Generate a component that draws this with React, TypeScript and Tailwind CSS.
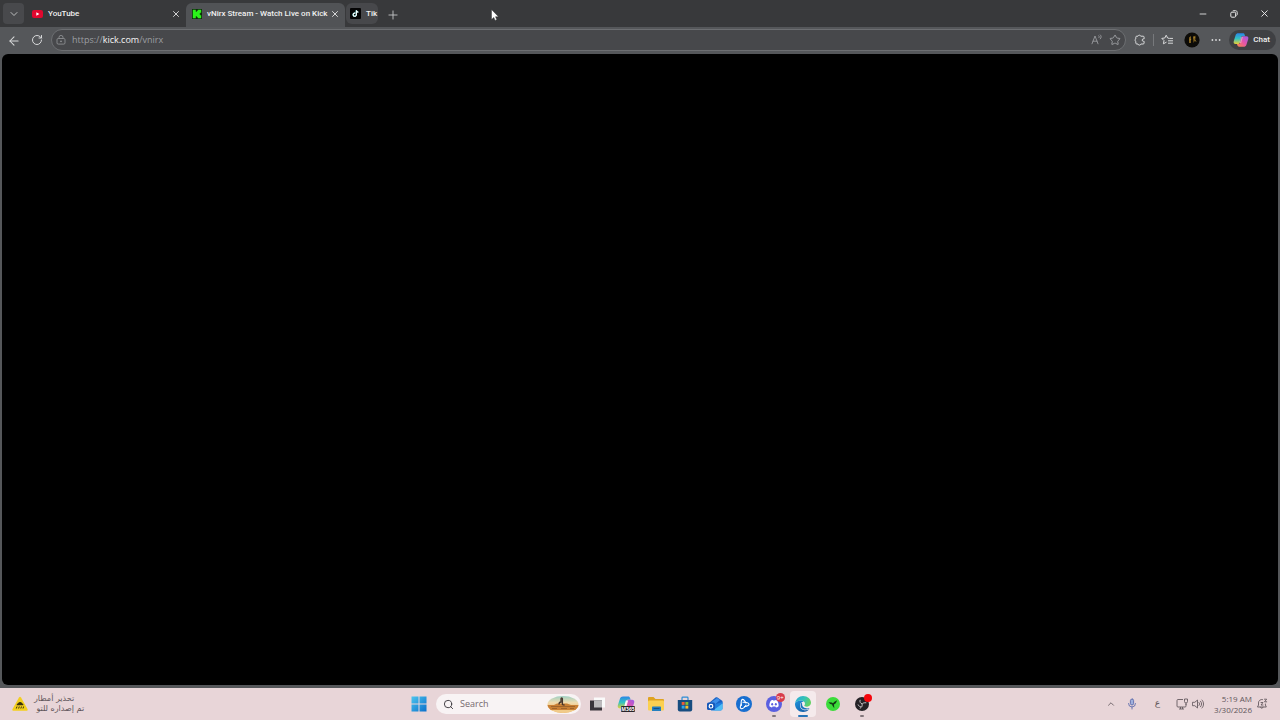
import type { ReactNode } from "react";
import { ArrowLeft, ChevronDown, ChevronUp, Minus, Plus, RotateCw, Search, Star, X } from "lucide-react";

function YouTubeIcon() {
  return (
    <svg viewBox="0 0 11 8" className="h-2 w-[11px] shrink-0">
      <rect width="11" height="8" rx="2" fill="#e0082f" />
      <path d="M4.3 2.2 7.4 4 4.3 5.8Z" fill="#fff" />
    </svg>
  );
}

function KickIcon() {
  return (
    <svg viewBox="0 0 10 10" className="size-2.5 shrink-0">
      <rect width="10" height="10" fill="#0c2b0a" />
      <path d="M.8.8h3v2h1v-1h1v-1h3.4v3h-1v1h-1v.5h1v1h1v3H5.8v-1h-1v-1h-1v2h-3Z" fill="#2bf31a" />
    </svg>
  );
}

function TikTokIcon() {
  return (
    <svg viewBox="0 0 11 11" className="size-[11px] shrink-0">
      <rect width="11" height="11" rx="1" fill="#050505" />
      <path d="M5.2 5.1a1.6 1.6 0 1 0 1 1.5V2.3c.2 1 .9 1.7 2 1.8" fill="none" stroke="#5de3e2" strokeWidth="1.1" />
      <path d="M5.4 5.2a1.6 1.6 0 1 0 1 1.5V2.4c.2 1 .9 1.7 2 1.8" fill="none" stroke="#fff" strokeWidth="1.1" />
    </svg>
  );
}

function LockBagIcon() {
  return (
    <svg viewBox="0 0 10 10" className="size-2.5 shrink-0" fill="none" stroke="#96989b" strokeWidth="0.8">
      <rect x="1" y="3.5" width="8" height="5.6" rx="1.2" />
      <path d="M3 3.5V2.4a2 2 0 0 1 4 0v1.1" />
      <circle cx="5" cy="6.3" r="0.5" fill="#96989b" />
    </svg>
  );
}

function ReadAloudIcon() {
  return (
    <svg viewBox="0 0 12 12" className="size-3" fill="none" stroke="#a3a5a8" strokeWidth="0.8" strokeLinecap="round">
      <path d="M1 9.8 4 2l3 7.8M2 7.2h4M7.8 1.8c.6.6.6 1.4 0 2M9.3.9c1.200 1.100 1.200 2.800 0 4" />
    </svg>
  );
}

function ExtensionsIcon() {
  return (
    <svg viewBox="0 0 12 12" className="size-3" fill="none" stroke="#d8d9da" strokeWidth="1" strokeLinejoin="round">
      <path d="M4 2.2a1.4 1.4 0 0 1 2.7 0h2.4a1 1 0 0 1 1 1v1.7H9.4a1.2 1.2 0 0 0 0 2.4h.7V9a1 1 0 0 1-1 1H6.9a1.5 1.5 0 0 1-2.9 0H2.8a1 1 0 0 1-1-1V7.3a1.3 1.3 0 0 1 0-2.4V3.2a1 1 0 0 1 1-1Z" />
    </svg>
  );
}

function FavoritesIcon() {
  return (
    <svg viewBox="0 0 13 12" className="h-3 w-[13px]" fill="none" stroke="#d8d9da" strokeWidth="1" strokeLinejoin="round" strokeLinecap="round">
      <path d="M7.7 4.3 6.6 4 5.2 1.2 3.8 4l-3 .4L3 6.6l-.6 3.2 2.8-1.5" />
      <path d="M8.6 4.4h3M7.4 6.8h4.2M7.4 9.2h4.2" />
    </svg>
  );
}

function Avatar() {
  return (
    <svg viewBox="0 0 16 16" className="size-4">
      <circle cx="8" cy="8" r="7.6" fill="#0c0b08" />
      <path d="M5 5.5 7 4v7H5ZM9 4.6l2.4-.8v3.6L9.6 11Z" fill="#80611f" />
      <path d="m5.4 8 1.8-.7M9.4 6l1.8-.6M11 8l1 1.6" stroke="#b18b32" strokeWidth="0.8" />
    </svg>
  );
}

function CopilotIcon({ badge = false }: { badge?: boolean }) {
  const id = badge ? "m365" : "chat";
  return (
    <svg viewBox="0 0 18 18" className={badge ? "size-[18px]" : "size-4"}>
      <defs>
        <linearGradient id={`${id}-l`} x1="0" y1="0" x2="0" y2="1">
          <stop offset="0" stopColor="#2a86e8" />
          <stop offset="0.5" stopColor="#34c3c0" />
          <stop offset="1" stopColor="#e8cf35" />
        </linearGradient>
        <linearGradient id={`${id}-r`} x1="1" y1="0" x2="0" y2="1">
          <stop offset="0" stopColor="#9a5bea" />
          <stop offset="0.5" stopColor="#e554a8" />
          <stop offset="1" stopColor="#fb8a45" />
        </linearGradient>
      </defs>
      <path d="M6 1.5h5.2c1 0 1.6.6 1.9 1.5l.5 1.8h-2.5c-1 0-1.6.6-1.9 1.5L7.5 12c-.3 1-.9 1.4-1.8 1.4H3c-2 0-2.7-1.3-2.1-3.3L3 3.5c.4-1.300 1.500-2 3-2Z" fill={`url(#${id}-l)`} />
      <path d="M12 16.500H6.800c-1 0-1.600-.6-1.900-1.500l-.5-1.600h1.500c1 0 1.700-.5 2-1.400l1.700-5.700c.3-1 .9-1.500 1.800-1.500H15c2 0 2.700 1.300 2.100 3.300L15 14.500c-.4 1.300-1.500 2-3 2Z" fill={`url(#${id}-r)`} />
      <path d="M8.800 5.500h2.400l-2 6.800H7Z" fill="#fff" opacity={badge ? 0.9 : 0.35} />
      {badge && (
        <>
          <rect x="4" y="11" width="14" height="6" rx="1" fill="#28242a" />
          <text x="11" y="16" textAnchor="middle" fontSize="5" fontWeight="700" fill="#fff">M365</text>
        </>
      )}
    </svg>
  );
}

function RestoreIcon() {
  return (
    <svg viewBox="0 0 8 8" className="size-2" fill="none" stroke="#e8e8e8" strokeWidth="1">
      <rect x="0.8" y="2.2" width="4.8" height="5" rx="1" />
      <path d="M2.5 1.2c.2-.4.5-.5.9-.5h2.1c1 0 1.7.7 1.7 1.7v2c0 .6-.2 1-.7 1.2" />
    </svg>
  );
}

function WarningIcon() {
  return (
    <svg viewBox="0 0 16 16" className="size-4">
      <path d="M7 1.6a1.2 1.2 0 0 1 2 0l6.500 11.400c.5.900 0 1.800-1 1.800h-13c-1 0-1.500-.9-1-1.800Z" fill="#f3cf1d" />
      <path d="M4.700 9.200a1.700 1.700 0 0 1 1.400-2 2.200 2.200 0 0 1 4 0 1.500 1.500 0 0 1 1.200 2Z" fill="#39320f" />
      <path d="m5 10.500-.7 2M7.300 10.500l-.7 2M9.500 10.500l-.7 2M11.600 10.500l-.6 2" stroke="#39320f" strokeWidth="1" />
    </svg>
  );
}

function StartIcon() {
  return (
    <svg viewBox="0 0 16 16" className="size-4">
      <linearGradient id="start" x1="0" y1="0" x2="1" y2="1">
        <stop offset="0" stopColor="#4cc5ee" />
        <stop offset="1" stopColor="#0a6fcb" />
      </linearGradient>
      <path d="M.5.5h7v7h-7ZM8.500.5h7v7h-7ZM.5 8.500h7v7h-7ZM8.500 8.500h7v7h-7Z" fill="url(#start)" />
    </svg>
  );
}

function SearchArt() {
  return (
    <svg viewBox="0 0 32 17" className="h-[17px] w-8 shrink-0">
      <defs>
        <linearGradient id="dusk" x1="0" y1="0" x2="0" y2="1">
          <stop offset="0" stopColor="#9fd0c4" />
          <stop offset="0.4" stopColor="#f2dcae" />
          <stop offset="1" stopColor="#e8a24c" />
        </linearGradient>
        <clipPath id="oval">
          <ellipse cx="16" cy="8.5" rx="15.5" ry="8.500" />
        </clipPath>
      </defs>
      <g clipPath="url(#oval)">
        <rect width="32" height="17" fill="url(#dusk)" />
        <path d="M0 9h7l3-1.500h10L24 9h8v5H0Z" fill="#c98034" />
        <path d="M4 10.500h24M5 12.500h5M14 12.500h6M23 12.500h4" stroke="#a0642a" strokeWidth="1" />
        <path d="M0 14h32v3H0Z" fill="#f0cb8a" />
      </g>
      <path d="M12 8.500c0-1.500 1-2.500 2-2.500V2.800c0-1.200 1.400-1.200 1.400 0v5.700l2.200.7" fill="none" stroke="#46352c" strokeWidth="1.300" />
    </svg>
  );
}

function TaskViewIcon() {
  return (
    <svg viewBox="0 0 16 16" className="size-4">
      <rect x="5" y="1.500" width="11" height="10" fill="#fafafa" />
      <rect x="1" y="4.500" width="12" height="10" fill="#38343a" />
      <rect x="5" y="4.500" width="8" height="7" fill="#bcbabc" />
    </svg>
  );
}

function FolderIcon() {
  return (
    <svg viewBox="0 0 18 16" className="h-4 w-[18px]">
      <path d="M1 2a1 1 0 0 1 1-1h4.500l2 2H16a1 1 0 0 1 1 1v4H1Z" fill="#dfa321" />
      <rect x="1" y="4.500" width="16" height="10" rx="1" fill="#fbd051" />
      <path d="M5 15v-3.400c0-.6.4-1 1-1h7c.6 0 1 .4 1 1V15Z" fill="#237fc0" />
      <path d="M6.500 12.500h6" stroke="#164f86" strokeWidth="1" />
    </svg>
  );
}

function StoreIcon() {
  return (
    <svg viewBox="0 0 16 16" className="size-4">
      <path d="M5 4.500V2c0-.5.3-.8.8-.8h4.400c.5 0 .8.3.8.8v2.500" fill="none" stroke="#2c8dd6" strokeWidth="1.200" />
      <path d="M.8 4h14.400v9.500a2 2 0 0 1-2 2H2.800a2 2 0 0 1-2-2Z" fill="#174d80" />
      <path d="M4.700 6h2.900v2.900H4.700Z" fill="#ee5c35" />
      <path d="M8.400 6h2.900v2.900H8.400Z" fill="#82bd36" />
      <path d="M4.700 9.700h2.900v2.900H4.700Z" fill="#2ca6e9" />
      <path d="M8.400 9.700h2.900v2.900H8.400Z" fill="#f8be2d" />
    </svg>
  );
}

function OutlookIcon() {
  return (
    <svg viewBox="0 0 16 16" className="size-4">
      <path d="M2 7 8.500 1.500c.6-.5 1.400-.5 2 0L15.500 5v3L6 12Z" fill="#1a62c4" />
      <path d="m4 6.500 6-4.500 3 2-7 6Z" fill="#3c8eea" />
      <path d="M4 9.500 15.500 6v6.500a2 2 0 0 1-2 2H4Z" fill="#1f7fe0" />
      <path d="m6 14.500 9.500-7v5a2 2 0 0 1-2 2Z" fill="#4fbdf4" />
      <rect y="6.500" width="8" height="7.500" rx="1.500" fill="#1557b8" />
      <circle cx="4" cy="10.200" r="1.800" fill="none" stroke="#fff" strokeWidth="1.200" />
    </svg>
  );
}

function BattleNetIcon() {
  return (
    <svg viewBox="0 0 16 16" className="size-4">
      <circle cx="8" cy="8" r="8" fill="#176ed0" />
      <g fill="none" stroke="#fff" strokeWidth="1.100" strokeLinecap="round">
        <path d="M5.300 9.500C5 6.500 5.300 3.600 6.500 3.400c1.100-.1 2.500 1.800 3.400 3.600" />
        <path d="M7 6.200c3-.1 5.900.8 6 2 .1 1.100-2.200 2-4.500 2.300" />
        <path d="M10 9.200c-1.600 2.200-3.900 3.900-5 3.300s-.7-2.600.3-4.600" />
      </g>
    </svg>
  );
}

function DiscordIcon() {
  return (
    <svg viewBox="0 0 16 16" className="size-4">
      <circle cx="8" cy="8" r="8" fill="#5a5fe0" />
      <path d="M5 4.600c1-.5 1.700-.6 2-.6l.3.600h1.400L9 4c.4 0 1.200.2 2 .6 1.200 1.700 1.800 3.600 1.600 5.700-.9.800-1.800 1.100-2.600 1.300l-.6-1H6.600l-.6 1c-.9-.2-1.800-.6-2.600-1.300-.2-2 .4-4 1.600-5.700Z" fill="#fff" />
      <ellipse cx="6.200" cy="8.300" rx="1" ry="1.200" fill="#5a5fe0" />
      <ellipse cx="9.800" cy="8.300" rx="1" ry="1.200" fill="#5a5fe0" />
    </svg>
  );
}

function EdgeIcon() {
  return (
    <svg viewBox="0 0 16 16" className="size-4">
      <defs>
        <linearGradient id="edge-top" x1="0" y1="0" x2="1" y2="0.4">
          <stop offset="0" stopColor="#2aa6d9" />
          <stop offset="0.6" stopColor="#36c3b6" />
          <stop offset="1" stopColor="#62d163" />
        </linearGradient>
        <linearGradient id="edge-base" x1="0" y1="0" x2="1" y2="1">
          <stop offset="0" stopColor="#2095dc" />
          <stop offset="1" stopColor="#12529f" />
        </linearGradient>
      </defs>
      <path d="M0 7.500C.6 3 4 0 8 0c4.600 0 8 3 8 6.800 0 2.300-1.800 3.900-4 3.900-1.800 0-2.700-.7-2.700-1.200 0-.4.700-.6.700-1.700C10 6 8.300 4.600 6 4.600 3.200 4.600 1 5.700 0 7.500Z" fill="url(#edge-top)" />
      <path d="M0 7.500C1 5.700 3.200 4.600 6 4.600c1 0 2 .3 2.700.8C6.400 5.600 5 7.300 5 9.500c0 2.800 2.500 4.800 5.500 4.800 1.600 0 2.900-.4 4-1.200C13 15 10.700 16 8 16c-4.500 0-8.300-3.600-8-8.500Z" fill="url(#edge-base)" />
      <path d="M7 6.200C6 7 5.600 8.200 5.600 9.400c0 2.600 2.300 4.200 4.900 4.200 1.500 0 3-.5 4.200-1.600-3.700 1.200-7.600-.4-7.600-3.400Z" fill="#1a70bd" />
    </svg>
  );
}

function ControllerAppIcon() {
  return (
    <svg viewBox="0 0 14 14" className="size-3.5">
      <circle cx="7" cy="7" r="7" fill="#3bdc3a" />
      <path d="m2.500 5.200 3.300.2 1.200.8 1.400-1.400 2.800-1.600-1.400 3L8 7.600l.3 3.600L6.500 8.800l-.4-1.200L4.200 7Z" fill="#123b14" />
    </svg>
  );
}

function ObsIcon() {
  return (
    <svg viewBox="0 0 14 14" className="size-3.5">
      <circle cx="7" cy="7" r="7" fill="#242226" />
      <g fill="none" stroke="#c4c2c5" strokeWidth="1">
        <path d="M5.200 2.800c-.8 2 .2 3.500 1.900 4.100" />
        <path d="M11.300 5.800C9.200 5.500 7.700 6.100 7.100 7" />
        <path d="M4.800 11.300C6.800 10.500 7.500 9 7.100 7M3 7.500c.6 1.800 2 2.300 3.500 1.900" />
      </g>
    </svg>
  );
}

function MicIcon() {
  return (
    <svg viewBox="0 0 10 12" className="h-3 w-2.5" fill="none" stroke="#5d6cab" strokeWidth="0.9" strokeLinecap="round">
      <rect x="3.400" y="1" width="3.200" height="6" rx="1.600" fill="#9eb0dd" />
      <path d="M1.500 5.500a3.500 3.500 0 0 0 7 0M5 9v2" />
    </svg>
  );
}

function NetworkIcon() {
  return (
    <svg viewBox="0 0 12 12" className="size-3" fill="none" stroke="#655a60" strokeWidth="0.9">
      <path d="M7 1.500H2a1 1 0 0 0-1 1v5.500a1 1 0 0 0 1 1h7a1 1 0 0 0 1-1V6M3 11h5M4.500 9v2M6.500 9v2" />
      <path d="M8.500 1h3v2.500a1.500 1.500 0 0 1-3 0ZM10 5v2" />
    </svg>
  );
}

function VolumeIcon() {
  return (
    <svg viewBox="0 0 12 12" className="size-3" fill="none" stroke="#655a60" strokeWidth="0.9" strokeLinecap="round" strokeLinejoin="round">
      <path d="M.8 4.300h2L5.500 2v8L2.800 7.700h-2ZM7 4.500c.8.900.8 2.100 0 3M8.500 3.200c1.500 1.600 1.500 4 0 5.600M10 2c2.100 2.300 2.100 5.700 0 8" />
    </svg>
  );
}

function BellIcon() {
  return (
    <svg viewBox="0 0 12 12" className="size-3" fill="none" stroke="#655a60" strokeWidth="0.9" strokeLinecap="round" strokeLinejoin="round">
      <path d="M6.500 1.500A3.300 3.300 0 0 0 2.500 5v2L1.500 9h8.800l-.9-2V6M4.500 9.200c.3 1.500 2.200 1.500 2.600 0M5 4.500h2L5 7h2M8.500 1.200h2.200L8.500 3.800h2.200" />
    </svg>
  );
}

type TabProps = { icon: ReactNode; title: string; className: string; closable?: boolean; selected?: boolean };

function Tab({ icon, title, className, closable = true, selected = false }: TabProps) {
  return (
    <div className={`flex items-center gap-1 pr-1 ${className}`}>
      <button role="tab" aria-selected={selected} className="flex min-w-0 flex-1 items-center gap-[5px] text-left whitespace-nowrap">
        {icon}
        <span>{title}</span>
      </button>
      {closable && (
        <button aria-label={`Close ${title}`} className="grid size-3 shrink-0 place-items-center">
          <X size={10} />
        </button>
      )}
    </div>
  );
}

const taskbarApps = [
  { name: "Task view", icon: <TaskViewIcon /> },
  { name: "Microsoft 365 Copilot", icon: <CopilotIcon badge /> },
  { name: "File Explorer", icon: <FolderIcon /> },
  { name: "Microsoft Store", icon: <StoreIcon /> },
  { name: "Outlook", icon: <OutlookIcon /> },
  { name: "Battle.net", icon: <BattleNetIcon /> },
  { name: "Discord", icon: <DiscordIcon />, badge: "9+", running: true },
  { name: "Microsoft Edge", icon: <EdgeIcon />, active: true },
  { name: "Controller", icon: <ControllerAppIcon /> },
  { name: "OBS Studio", icon: <ObsIcon />, recording: true, running: true },
];

function TabStrip() {
  return (
    <header className="flex h-[27px] shrink-0 items-center bg-[#38393b] pl-[3px] font-[Roboto,sans-serif] text-[8px] font-medium text-[#f0f0f0]">
      <button aria-label="Tab actions" className="grid size-[21px] place-items-center rounded bg-[#48494c]">
        <ChevronDown size={12} strokeWidth={1.8} color="#c8c9ca" />
      </button>
      <div role="tablist" className="flex h-full items-start pt-[3px]">
        <Tab icon={<YouTubeIcon />} title="YouTube" className="h-[21px] w-[162px] pl-2" />
        <Tab icon={<KickIcon />} title="vNirx Stream - Watch Live on Kick" className="h-6 w-[159px] rounded-t-md bg-[#515356] pb-[3px] pl-1.5" selected />
        <Tab icon={<TikTokIcon />} title="Tik" className="ml-px h-[21px] w-8 rounded-md bg-[#47484b] pl-1" closable={false} />
      </div>
      <button aria-label="New tab" className="ml-2 grid size-3 place-items-center">
        <Plus size={14} strokeWidth={1.5} color="#c8c9ca" />
      </button>
      <div className="ml-auto flex">
        <button aria-label="Minimize" className="grid h-6 w-[31px] place-items-center"><Minus size={10} /></button>
        <button aria-label="Restore" className="grid h-6 w-[31px] place-items-center"><RestoreIcon /></button>
        <button aria-label="Close window" className="grid h-6 w-[31px] place-items-center"><X size={11} /></button>
      </div>
    </header>
  );
}

function Toolbar() {
  return (
    <nav className="flex h-[26px] shrink-0 items-center pr-1 pl-[7px] text-[#d8d9da]">
      <button aria-label="Back" className="grid size-3 place-items-center"><ArrowLeft size={14} strokeWidth={1.8} /></button>
      <button aria-label="Refresh" className="ml-3 grid size-3 place-items-center"><RotateCw size={12} /></button>
      <div className="ml-2 flex h-[22px] flex-1 items-center rounded-full border border-[#6d6f72] bg-[#47484b] pr-1 pl-1">
        <LockBagIcon />
        <label className="ml-1.5 flex flex-1 items-center text-[9px] text-[#9c9ea1]">
          <span>https://</span>
          <span className="text-[#f4f4f4]">kick.com</span>
          <input aria-label="Address" defaultValue="/vnirx" className="min-w-0 flex-1 bg-transparent outline-none" />
        </label>
        <button aria-label="Read aloud"><ReadAloudIcon /></button>
        <button aria-label="Add to favorites" className="ml-1.5"><Star size={12} strokeWidth={1.8} color="#a3a5a8" /></button>
      </div>
      <button aria-label="Extensions" className="ml-2"><ExtensionsIcon /></button>
      <span className="ml-[7px] h-3 w-px bg-[#77797c]" />
      <button aria-label="Favorites" className="ml-[7px]"><FavoritesIcon /></button>
      <button aria-label="Profile" className="ml-2.5"><Avatar /></button>
      <button aria-label="Settings and more" className="ml-[11px]">
        <svg viewBox="0 0 10 10" className="size-2.5" fill="#d8d9da">
          <circle cx="1.400" cy="5" r="0.900" /><circle cx="5" cy="5" r="0.900" /><circle cx="8.600" cy="5" r="0.900" />
        </svg>
      </button>
      <button className="ml-2 flex h-5 items-center gap-1 rounded-full bg-[#3f4043] px-1 pr-1.5 font-[Roboto,sans-serif] text-[8px] font-medium text-[#f0f0f0]">
        <CopilotIcon />
        Chat
      </button>
    </nav>
  );
}

function Taskbar() {
  return (
    <footer className="grid h-8 shrink-0 grid-cols-[1fr_auto_1fr] items-center bg-[#e8d5d8] text-[#5f555a]">
      <button className="ml-3 flex items-center gap-1.5 justify-self-start font-['DejaVu_Sans',sans-serif] text-[8px] leading-[10px]">
        <WarningIcon />
        <span dir="rtl" lang="ar" className="text-right">
          <span className="block pr-2.5">تحذير أمطار</span>
          <span className="block">تم إصداره للتو</span>
        </span>
      </button>

      <div className="flex h-full items-center pl-px">
        <button aria-label="Start" className="mr-[3px] grid w-[29px] place-items-center"><StartIcon /></button>
        <label className="mr-px flex h-5 w-[145px] items-center rounded-full bg-[#f8f3f4] pr-0.5 pl-[7px]">
          <Search size={11} color="#38343a" />
          <input type="search" aria-label="Search" placeholder="Search" className="ml-1.5 min-w-0 flex-1 bg-transparent text-[9px] outline-none placeholder:text-[#75696e]" />
          <SearchArt />
        </label>
        <div className="grid h-full w-[295px] grid-cols-10 items-center">
          {taskbarApps.map((app) => (
            <button
              key={app.name}
              aria-label={app.name}
              className={`relative mx-auto grid h-[26px] w-[26px] place-items-center rounded-sm ${app.active ? "bg-[#f5eaec]" : ""}`}
            >
              {app.icon}
              {app.badge && (
                <span className="absolute top-0.5 right-0.5 grid size-[9px] place-items-center rounded-full bg-[#d83b4b] text-[6px] leading-none text-white">
                  {app.badge}
                </span>
              )}
              {app.recording && <span className="absolute top-[3px] right-[3px] size-2 rounded-full bg-[#f4060c]" />}
              {app.running && <span className="absolute bottom-0 h-0.5 w-1 rounded-full bg-[#82767b]" />}
              {app.active && <span className="absolute bottom-0 h-0.5 w-2.5 rounded-full bg-[#2673b8]" />}
            </button>
          ))}
        </div>
      </div>

      <div className="mr-3 flex items-center justify-self-end">
        <button aria-label="Show hidden icons"><ChevronUp size={10} /></button>
        <button aria-label="Microphone" className="ml-[11px]"><MicIcon /></button>
        <button lang="ar" className="ml-[18px] font-['DejaVu_Sans',sans-serif] text-[9px]">ع</button>
        <button aria-label="Network" className="ml-4"><NetworkIcon /></button>
        <button aria-label="Volume" className="ml-1"><VolumeIcon /></button>
        <button className="ml-2.5 text-right text-[8px] leading-[11px]">
          <span className="block">5:19 AM</span>
          <span className="block">3/30/2026</span>
        </button>
        <button aria-label="Notifications" className="ml-1"><BellIcon /></button>
      </div>
    </footer>
  );
}

export default function App() {
  return (
    <div className="relative flex h-screen flex-col overflow-hidden bg-[#55575a] font-['Open_Sans','Noto_Sans',sans-serif]">
      <TabStrip />
      <Toolbar />
      <main className="mx-0.5 mt-px mb-[3px] flex-1 rounded-md bg-black" />
      <Taskbar />
      <svg viewBox="0 0 8 12" className="pointer-events-none absolute top-[9px] left-[491px] h-3 w-2">
        <path d="M.5.5v10l2.300-2.100 1.300 3 1.700-.7-1.300-3h3Z" fill="#fff" stroke="#222" strokeWidth="0.400" />
      </svg>
    </div>
  );
}
